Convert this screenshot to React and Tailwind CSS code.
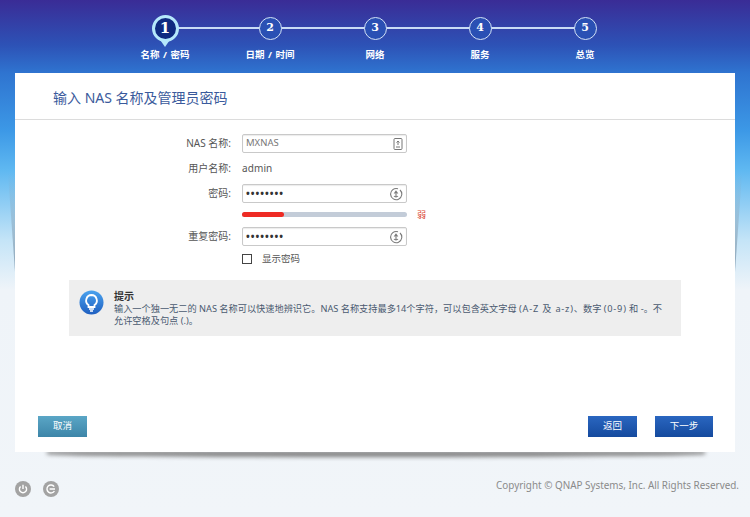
const font = { fontFamily: "'Noto Sans', 'Noto Sans CJK SC', sans-serif" };

const steps = ['名称 / 密码', '日期 / 时间', '网络', '服务', '总览'];

function Stepper() {
  return (
    <div className="relative flex h-[73px] justify-center">
      {/* connecting line between the step circles */}
      <div className="absolute left-[165px] top-[27px] h-[2px] w-[420px] bg-[#c9dcf5]" />
      {steps.map((label, i) => (
        <div key={label} className="relative flex w-[105px] flex-col items-center">
          {i === 0 ? (
            <div className="relative mt-[15px] h-[27px] w-[27px]">
              <div className="absolute left-[4.5px] top-[19px] h-0 w-0 border-x-[9px] border-t-[13px] border-x-transparent border-t-[#b5e8fb]" />
              <div className="absolute inset-0 flex items-center justify-center rounded-full border-[3px] border-[#b5e8fb] bg-[#0f2a80] text-[15px] font-bold text-white [font-family:'DejaVu_Serif',serif]">
                1
              </div>
            </div>
          ) : (
            <div className="relative mt-[17px] flex h-[23px] w-[23px] items-center justify-center rounded-full border-[1.5px] border-[#d3e2f6] bg-[#2a50b4] text-[11px] font-bold text-white [font-family:'DejaVu_Serif',serif]">
              {i + 1}
            </div>
          )}
          <div className={`${i === 0 ? 'mt-[6px]' : 'mt-[8px]'} text-[9.5px] font-bold leading-[14px] whitespace-nowrap text-white [word-spacing:1px]`}>{label}</div>
        </div>
      ))}
    </div>
  );
}

function FieldIcon() {
  return (
    <svg width="14" height="14" viewBox="0 0 14 14" fill="none" stroke="#7a7a7a" strokeWidth="1.1">
      <path d="M9 1.8 A5.6 5.6 0 1 0 11 3" />
      <path d="M7 3.2 L9.3 6.5 H4.7 Z" fill="#7a7a7a" stroke="none" />
      <path d="M7 6.5 V10.5 M5 9 A2.6 2.6 0 0 0 9 9" />
    </svg>
  );
}

function Row({ label, children, className = '' }) {
  return (
    <div className={`flex items-center ${className}`}>
      <div className="w-[216px] shrink-0 text-right text-[10px] text-[#555]">{label}</div>
      <div className="ml-[11px] flex flex-1 items-center">{children}</div>
    </div>
  );
}

function Input({ value, icon, dots }) {
  return (
    <div className="flex h-[19px] w-[165px] items-center justify-between rounded-[2px] border border-[#c9c9c9] pl-[3px] pr-[3px] shadow-[inset_0_1px_1px_rgba(0,0,0,0.08)]">
      <span className={dots ? 'text-[10px] font-bold tracking-[1px] text-[#333]' : 'text-[9.5px] text-[#777]'}>{value}</span>
      {icon}
    </div>
  );
}

export default function App() {
  return (
    <div
      className="flex h-[517px] w-[750px] flex-col overflow-hidden bg-[linear-gradient(180deg,#3a2c96_0px,#2d52b6_45px,#2f74d0_73px,#3c98e6_130px,#5fb8f1_170px,#c4e4f7_240px,#eff4f9_290px,#f1f5f9_517px)]"
      style={font}
    >
      <Stepper />

      <div className="relative mx-[15px] h-[379px]">
        {/* side wedges and soft shadow under the card */}
        <div className="absolute left-[-7px] top-[100px] h-[99px] w-[7px] bg-[linear-gradient(180deg,transparent,#8aa4b8)] [clip-path:polygon(0_0,100%_0,100%_100%)]" />
        <div className="absolute right-[-7px] top-[100px] h-[99px] w-[7px] bg-[linear-gradient(180deg,transparent,#8aa4b8)] [clip-path:polygon(0_0,100%_0,0_100%)]" />
        <div className="absolute bottom-[-5px] left-[32px] right-[30px] h-[6px] rounded-b-[50%] bg-[#808080] blur-[2px]" />
        <div className="relative flex h-full flex-col bg-white">
          <div className="flex h-[47px] shrink-0 items-center border-b border-[#dcdcdc] pl-[38px] pt-[2px] text-[14px] text-[#3a5a9c]">
            输入 NAS 名称及管理员密码
          </div>

          <div className="mt-[14px] flex flex-col">
            <Row label="NAS 名称:">
              <Input
                value="MXNAS"
                icon={
                  <svg width="10" height="12" viewBox="0 0 10 12" fill="none" stroke="#777" strokeWidth="1">
                    <rect x="1" y="0.5" width="8" height="11" rx="1" />
                    <path d="M5 3 V7 M3.5 4.5 L5 3 L6.5 4.5 M3 9 H7" />
                  </svg>
                }
              />
            </Row>
            <Row label="用户名称:" className="mt-[6px] h-[19px]">
              <span className="text-[10px] tracking-[0.1px] text-[#555]">admin</span>
            </Row>
            <Row label="密码:" className="mt-[6px]">
              <Input value="••••••••" dots icon={<FieldIcon />} />
            </Row>
            <Row label="" className="mt-[9px] h-[5px]">
              <div className="h-[5px] w-[165px] rounded-[3px] bg-[#c3ccd8]">
                <div className="h-[5px] w-[42px] rounded-[3px] bg-[#ee2b24]" />
              </div>
              <span className="ml-[10px] text-[9px] text-[#d9412f]">弱</span>
            </Row>
            <Row label="重复密码:" className="mt-[10px]">
              <Input value="••••••••" dots icon={<FieldIcon />} />
            </Row>
            <Row label="" className="mt-[6px] h-[14px]">
              <div className="h-[10px] w-[10px] border border-[#444] bg-white" />
              <span className="ml-[10px] text-[9.5px] text-[#555]">显示密码</span>
            </Row>
          </div>

          <div className="mx-[54px] mt-[14px] flex h-[56px] w-[612px] bg-[#eeeeee] pl-[10px] pt-[10px]">
            <svg width="25" height="25" viewBox="0 0 25 25" className="shrink-0">
              <defs>
                <linearGradient id="bulb" x1="0" y1="0" x2="0" y2="1">
                  <stop offset="0" stopColor="#4aa2ee" />
                  <stop offset="1" stopColor="#1f5fc0" />
                </linearGradient>
              </defs>
              <circle cx="12.5" cy="12.5" r="12" fill="url(#bulb)" />
              <path d="M12.5 5 A5.5 5.5 0 0 0 9.5 15 V17 H15.5 V15 A5.5 5.5 0 0 0 12.5 5 Z" fill="none" stroke="#fff" strokeWidth="1.8" />
              <path d="M10 19 H15 M11 21 H14" stroke="#fff" strokeWidth="1.3" />
            </svg>
            <div className="ml-[10px] w-[552px] text-[9.2px] text-[#4a5a70]">
              <div className="text-[10px] font-bold leading-[13px] text-[#333]">提示</div>
              <div className="leading-[12px]">
                输入一个独一无二的 NAS 名称可以快速地辨识它。NAS 名称支持最多14个字符，可以包含英文字母{' '}
                <span className="tracking-[0.8px]">(A-Z 及 a-z)</span>、数字 <span className="tracking-[0.8px]">(0-9)</span> 和 -。不允许空格及句点 (.)。
              </div>
            </div>
          </div>

          <div className="mt-auto mb-[15px] flex items-center pl-[23px] pr-[22px]">
            <button className="h-[21px] w-[49px] bg-[linear-gradient(180deg,#5aa6c6,#3d85a8)] text-[9.5px] text-white">取消</button>
            <button className="ml-auto h-[21px] w-[49px] bg-[linear-gradient(180deg,#2a66c0,#154a9e)] text-[9.5px] text-white">返回</button>
            <button className="ml-[18px] h-[21px] w-[58px] bg-[linear-gradient(180deg,#2a66c0,#154a9e)] text-[9.5px] text-white">下一步</button>
          </div>
        </div>
      </div>

      <div className="flex flex-1 items-start justify-between pl-[15px] pr-[11px] pt-[29px]">
        <div className="flex gap-[12px]">
          <svg width="16" height="16" viewBox="0 0 16 16">
            <circle cx="8" cy="8" r="8" fill="#a3a3a3" />
            <path d="M5.6 5.4 A3.6 3.6 0 1 0 10.4 5.4 M8 3.8 V8" fill="none" stroke="#fff" strokeWidth="1.4" />
          </svg>
          <svg width="16" height="16" viewBox="0 0 16 16">
            <circle cx="8" cy="8" r="8" fill="#a3a3a3" />
            <path d="M11.2 5.6 A4 4 0 1 0 11.4 10 M6.6 8 H12" fill="none" stroke="#fff" strokeWidth="1.4" />
          </svg>
        </div>
        <div className="-mt-[3px] text-[9.9px] text-[#8a8a8a]">Copyright © QNAP Systems, Inc. All Rights Reserved.</div>
      </div>
    </div>
  );
}
